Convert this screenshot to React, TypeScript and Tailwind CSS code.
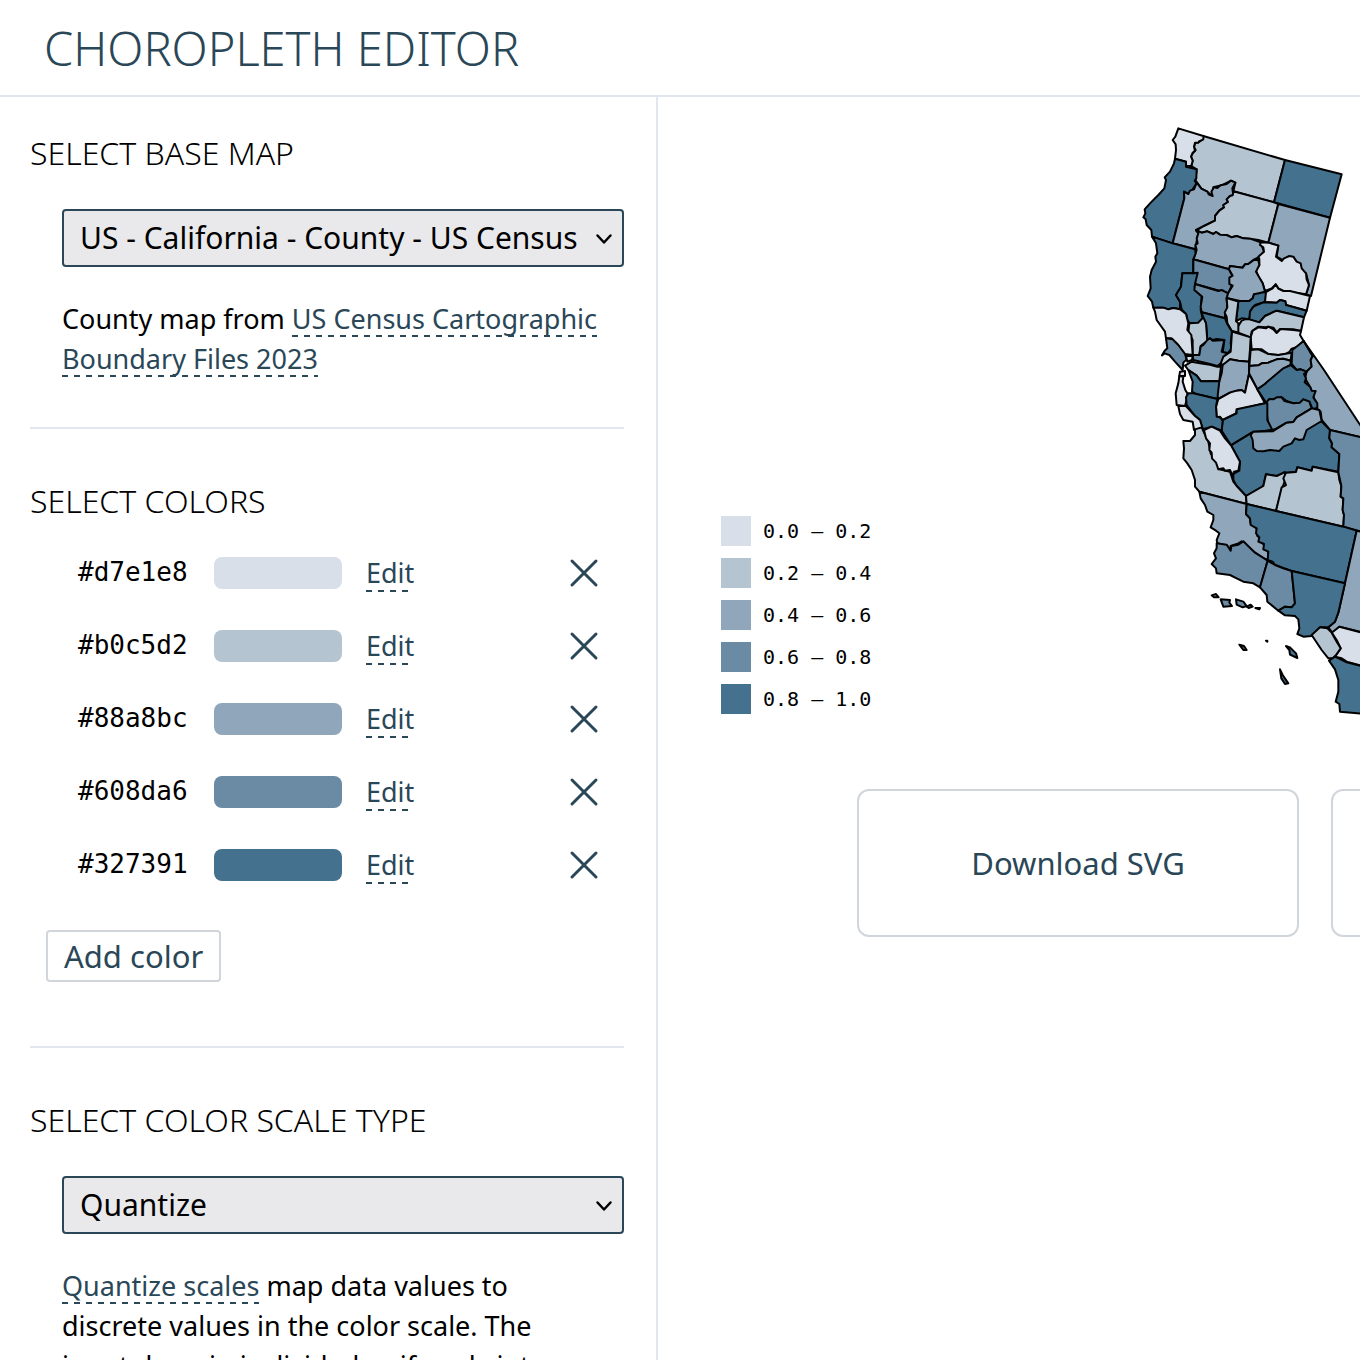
import { useState } from "react";

interface County {
  points: string;
  level: number;
}

const palette = [
  { hex: "#d7e1e8", swatch: "bg-[#d8dfe8]", fill: "fill-[#d8dfe8]" },
  { hex: "#b0c5d2", swatch: "bg-[#b4c4d1]", fill: "fill-[#b4c4d1]" },
  { hex: "#88a8bc", swatch: "bg-[#8fa6bb]", fill: "fill-[#8fa6bb]" },
  { hex: "#608da6", swatch: "bg-[#6b8aa4]", fill: "fill-[#6b8aa4]" },
  { hex: "#327391", swatch: "bg-[#44718e]", fill: "fill-[#44718e]" },
];

const legend = ["0.0 – 0.2", "0.2 – 0.4", "0.4 – 0.6", "0.6 – 0.8", "0.8 – 1.0"];

const counties: County[] = [
  // Siskiyou
  { level: 1, points: "220,78 465,150 432,277 310,244 316,218 303,212 278,225 250,232 246,258 232,245 214,236 203,220 196,210 200,178 184,168 188,152 183,140 188,130 197,120 192,112 195,98 205,97 218,88" },
  // Del Norte
  { level: 0, points: "145,55 220,78 220,88 207,94 205,98 195,98 192,110 195,122 188,128 183,140 188,152 184,168 168,167 168,155 135,146 138,120 137,103 128,90 136,80" },
  // Modoc
  { level: 4, points: "465,150 635,193 600,323 432,277" },
  // Humboldt
  { level: 4, points: "135,146 168,155 168,170 200,178 199,205 194,212 200,220 188,238 175,252 162,245 163,265 128,400 66,380 64,360 50,345 47,328 40,322 46,310 44,298 60,280 85,255 103,235 108,210 104,202 120,185 132,160" },
  // Trinity
  { level: 2, points: "162,245 175,252 180,242 192,238 200,218 214,236 232,245 236,253 248,258 244,245 252,232 262,234 272,226 290,222 303,212 316,218 307,235 310,256 300,258 290,268 294,276 280,285 282,292 268,302 255,318 255,332 222,348 198,360 205,370 195,418 128,400 163,265" },
  // Shasta
  { level: 1, points: "310,244 432,277 445,282 415,398 385,390 360,386 340,385 320,378 305,382 290,375 270,374 258,366 250,372 232,364 215,368 198,362 222,348 255,332 255,318 268,302 282,292 280,285 294,276 290,268 300,258 308,256" },
  // Lassen
  { level: 2, points: "445,282 600,323 543,558 528,553 537,525 528,490 440,440 445,407 415,398" },
  // Tehama
  { level: 2, points: "198,360 215,368 232,364 250,372 258,366 270,374 290,375 305,382 320,378 340,385 360,386 392,397 402,425 390,440 370,450 355,462 345,463 337,473 300,468 297,478 190,448 200,420 196,405 203,400 200,385 205,370" },
  // Plumas
  { level: 0, points: "415,398 445,407 438,440 455,453 462,445 478,438 490,440 500,455 512,460 515,475 528,490 530,508 537,525 528,553 460,543 445,535 437,523 425,535 405,543 398,520 385,500 378,482 388,465 388,447 385,440 402,425 400,412 390,405 392,397" },
  // Mendocino
  { level: 4, points: "66,380 128,400 195,418 197,430 190,448 190,490 157,490 153,530 138,555 150,575 150,598 130,594 115,598 100,593 70,593 66,575 53,558 62,535 60,500 65,480 78,455 76,440 82,430 78,400" },
  // Lake
  { level: 4, points: "157,490 190,490 205,488 200,510 194,530 200,545 215,558 212,600 218,625 205,638 180,640 172,630 168,612 155,598 150,575 138,555 153,530" },
  // Glenn
  { level: 3, points: "190,448 297,478 308,500 300,518 306,525 295,550 195,522 203,488 190,490" },
  // Colusa
  { level: 3, points: "195,522 265,543 275,540 295,550 290,566 292,595 285,608 285,625 215,607 212,590 217,560 193,540" },
  // Butte
  { level: 2, points: "297,478 300,468 338,473 345,463 355,462 372,450 385,450 388,465 378,485 398,520 405,545 385,552 372,553 368,565 358,573 330,573 290,564 295,548 308,527 298,522 298,503 308,497" },
  // Yuba
  { level: 4, points: "325,573 358,573 368,565 372,553 408,545 407,575 375,585 362,602 358,628 335,625 318,633" },
  // Sierra
  { level: 0, points: "408,546 428,535 437,523 445,536 460,543 480,543 540,558 530,602 468,585 466,574 450,570 440,578 405,576" },
  // Nevada
  { level: 4, points: "358,628 360,605 370,590 400,577 440,578 450,570 466,574 468,585 530,602 522,622 440,602 405,618 388,637" },
  // Placer
  { level: 1, points: "522,622 513,663 490,658 450,657 440,667 430,653 415,650 408,652 385,650 365,665 362,682 325,668 320,655 335,632 345,628 358,628 388,637 405,618 440,602" },
  // Sutter
  { level: 1, points: "290,564 325,575 318,633 325,640 325,668 305,662 292,640 290,620 284,608 292,592" },
  // El Dorado
  { level: 0, points: "362,682 368,662 385,652 408,655 415,650 430,658 440,669 452,657 490,660 513,663 510,675 521,693 500,712 485,716 478,726 465,733 445,735 415,732 395,718 365,718" },
  // Yolo
  { level: 4, points: "215,607 285,625 292,642 306,665 302,700 305,715 295,728 278,728 283,690 260,687 248,690 240,685 232,692 228,640 220,625" },
  // Napa
  { level: 1, points: "178,640 205,638 220,622 228,640 232,692 212,708 208,735 188,735 188,690 175,665" },
  // Sonoma
  { level: 0, points: "70,593 100,593 115,598 130,594 150,598 168,612 175,640 172,660 184,675 188,735 165,732 140,700 125,685 108,685 105,665 80,630 75,605" },
  // Marin
  { level: 3, points: "108,685 128,688 145,705 165,732 170,748 160,758 158,780 135,755 118,735 104,730 96,736 104,722 112,715" },
  // Solano
  { level: 3, points: "232,690 240,685 248,692 283,690 275,725 292,730 280,755 262,768 240,762 190,750 188,735 208,735 212,710 220,705" },
  // Sacramento
  { level: 1, points: "306,665 362,682 360,718 357,755 325,752 300,748 285,762 270,766 280,740 302,725" },
  // Contra Costa
  { level: 1, points: "165,767 185,755 210,760 240,764 262,770 273,768 268,813 213,814 200,797 175,780" },
  // Amador
  { level: 1, points: "362,720 385,718 400,725 415,732 445,735 485,728 482,752 460,746 440,748 415,758 395,760 385,766 358,768" },
  // Calaveras
  { level: 2, points: "358,768 385,766 395,760 415,758 440,748 460,746 482,752 482,765 462,775 405,822 382,838 357,790" },
  // Alpine
  { level: 3, points: "487,720 521,693 548,738 542,750 545,770 530,785 512,778 500,780 485,762" },
  // San Joaquin
  { level: 2, points: "300,748 325,752 357,755 357,792 345,848 335,840 320,842 300,848 265,867 258,850 275,790 278,765" },
  // Alameda
  { level: 4, points: "175,780 200,797 213,814 268,813 262,867 225,858 200,853 186,845 188,815" },
  // Stanislaus
  { level: 0, points: "357,792 382,838 405,880 320,900 318,910 278,930 270,920 260,922 258,890 265,867 300,848 320,842 335,840 345,848" },
  // Mono
  { level: 2, points: "521,693 582,780 730,1005 730,990 600,960 575,930 572,905 560,895 552,865 540,830 525,805 530,785 545,770 542,750 548,738" },
  // Tuolumne
  { level: 4, points: "482,765 500,780 512,778 530,785 522,792 528,805 524,817 540,830 545,842 557,843 550,862 562,880 562,893 548,898 538,875 520,868 510,878 490,880 470,873 455,862 430,868 408,878 382,838 405,822 412,815 460,775" },
  // Mariposa
  { level: 3, points: "408,878 418,867 430,868 440,862 455,862 463,873 490,880 510,878 520,868 538,875 545,895 500,922 490,936 470,938 428,962 416,950 410,910" },
  // Merced
  { level: 4, points: "278,930 320,910 320,898 405,880 412,880 412,930 428,962 370,965 303,1006 275,962" },
  // Fresno
  { level: 4, points: "303,1006 362,970 575,935 600,960 598,985 606,1000 605,1012 628,1032 625,1085 548,1070 545,1082 502,1072 498,1086 470,1088 440,1098 408,1093 400,1128 348,1158 320,1128 310,1110 310,1092 328,1082 330,1055" },
  // Madera
  { level: 2, points: "370,965 428,964 470,938 490,936 500,922 545,895 568,900 575,933 530,960 520,988 508,990 495,985 485,1000 460,1010 448,1023 420,1020 400,1024 380,1023 370,1015 368,990 362,975" },
  // San Mateo
  { level: 0, points: "148,798 160,800 158,815 166,840 172,850 172,862 165,888 140,885 137,850 145,820" },
  // Santa Clara
  { level: 4, points: "175,850 190,850 225,858 262,867 258,890 260,920 270,922 278,932 275,962 245,950 218,958 210,930 195,918 170,885 168,862" },
  // Santa Cruz
  { level: 0, points: "145,888 168,888 195,918 210,930 218,955 192,960 188,935 160,930 150,912" },
  // Monterey
  { level: 1, points: "195,958 215,952 222,968 235,995 242,1030 262,1060 268,1078 300,1085 310,1115 320,1128 348,1158 350,1182 208,1145 195,1130 195,1110 185,1080 172,1060 160,1045 162,1015 160,993 180,993 195,975" },
  // San Benito
  { level: 0, points: "222,960 245,950 270,962 285,985 303,1006 330,1055 325,1082 312,1085 308,1098 300,1080 285,1082 280,1075 265,1078 258,1058 246,1045 245,1028 238,1020 240,1000 228,985" },
  // Kings
  { level: 1, points: "408,1093 440,1098 465,1086 468,1105 458,1130 438,1203 350,1182 348,1158 400,1128" },
  // Tulare
  { level: 1, points: "468,1088 498,1086 502,1072 545,1082 548,1070 625,1087 628,1110 634,1128 632,1160 640,1165 638,1200 642,1215 640,1250 438,1203 455,1132 468,1125 460,1105" },
  // Inyo
  { level: 3, points: "600,960 730,990 730,1275 640,1250 642,1215 638,1200 640,1165 632,1160 634,1128 625,1087 628,1032 605,1012 606,1000 598,985" },
  // San Luis Obispo
  { level: 2, points: "208,1145 350,1182 348,1212 360,1225 362,1240 380,1255 382,1278 398,1290 400,1302 415,1310 415,1350 400,1345 375,1328 335,1294 325,1300 302,1308 302,1320 290,1308 262,1300 260,1290 268,1270 258,1262 242,1252 250,1230 250,1215 232,1205 225,1185 212,1165" },
  // Kern
  { level: 4, points: "350,1182 438,1203 640,1250 680,1262 645,1420 485,1383 435,1365 428,1355 413,1350 415,1325 400,1318 402,1302 385,1295 388,1282 378,1270 380,1255 362,1245 360,1225 348,1212" },
  // Santa Barbara
  { level: 3, points: "260,1300 290,1304 302,1322 304,1308 325,1304 340,1294 375,1328 413,1352 390,1432 370,1420 340,1415 320,1405 300,1395 260,1390 258,1375 245,1362 258,1345 252,1330 260,1315" },
  // Ventura
  { level: 3, points: "413,1352 435,1365 460,1375 485,1383 495,1480 485,1492 465,1490 445,1502 412,1475 410,1455 390,1432" },
  // San Bernardino
  { level: 2, points: "680,1262 730,1275 730,1575 628,1550 608,1570 595,1552 615,1535 625,1508 645,1420" },
  // Los Angeles
  { level: 4, points: "485,1383 645,1420 625,1508 615,1535 595,1552 570,1552 545,1578 520,1580 502,1572 508,1555 505,1528 495,1518 465,1516 445,1502 465,1490 485,1492 495,1480" },
  // Riverside
  { level: 0, points: "628,1550 730,1577 730,1677 650,1655 635,1645 615,1640 632,1615 620,1590 605,1568" },
  // Orange
  { level: 1, points: "545,1575 570,1552 592,1555 605,1568 620,1595 632,1615 618,1635 608,1645 595,1645 575,1620" },
  // San Diego
  { level: 4, points: "597,1652 615,1640 650,1657 730,1677 730,1814 630,1805 628,1782 617,1775 625,1745 625,1710 615,1678" },
];

// Channel Islands, San Francisco and the north bay shore
const islands: County[] = [
  { level: 3, points: "245,1456 258,1452 266,1462 252,1462" },
  { level: 3, points: "272,1468 300,1470 298,1478 306,1488 280,1490" },
  { level: 3, points: "318,1468 340,1475 350,1488 338,1492 320,1484" },
  { level: 3, points: "350,1490 362,1484 368,1490 356,1494" },
  { level: 3, points: "376,1494 390,1494 388,1498" },
  { level: 4, points: "328,1604 342,1608 350,1620 340,1620" },
  { level: 4, points: "408,1592 412,1592 412,1595" },
  { level: 4, points: "468,1608 480,1612 498,1630 502,1644 480,1634 478,1620" },
  { level: 4, points: "450,1678 458,1695 475,1720 465,1722 454,1705" },
  { level: 0, points: "150,785 165,783 165,798 148,798" },
  { level: 0, points: "168,738 188,738 186,750 172,755" },
];

const CaliforniaMap = () => (
  <svg viewBox="0 0 720 1920" className="w-60 h-[640px] shrink-0" role="img">
    <g className="stroke-black stroke-[6px]" strokeLinejoin="round">
      {[...counties, ...islands].map(({ points, level }) => (
        <polygon key={points} points={points} className={palette[level].fill} />
      ))}
    </g>
  </svg>
);

interface SelectFieldProps {
  id: string;
  options: string[];
}

const SelectField = ({ id, options }: SelectFieldProps) => (
  <div className="relative">
    <select
      id={id}
      className="block w-full h-[58px] pl-4 pr-9 text-[30px] leading-[40px] text-black bg-[#e9e9eb] border-2 border-[#2a4758] rounded appearance-none"
    >
      {options.map((option) => (
        <option key={option}>{option}</option>
      ))}
    </select>
    <svg
      viewBox="0 0 18 12"
      className="absolute right-[11px] top-6 w-[18px] h-3 pointer-events-none"
      fill="none"
      stroke="black"
      strokeWidth="2.5"
      strokeLinecap="round"
      strokeLinejoin="round"
    >
      <path d="M2.500 2.500l6.500 7 6.500-7" />
    </svg>
  </div>
);

// dashed underline drawn as a background, six pixels on and six off
const linkStyle =
  "text-[#2a4758] bg-[repeating-linear-gradient(90deg,#2a4758_0_6px,transparent_6px_12px)] bg-[length:100%_2px] bg-bottom bg-no-repeat box-decoration-clone";
const headingStyle = "text-[32px] leading-10 font-light uppercase";

const App = () => {
  const [colors, setColors] = useState(palette);

  return (
    <div className="flex flex-col h-screen overflow-hidden bg-white text-black font-['Noto_Sans',sans-serif]">
      <header className="shrink-0 px-11 pt-4 pb-[15px] border-b-2 border-[#e2e6f0]">
        <h1 className="text-[47px] leading-[64px] font-light uppercase text-[#2a4758]">
          Choropleth Editor
        </h1>
      </header>

      <div className="flex flex-1 min-h-0">
        <aside className="w-[658px] shrink-0 overflow-hidden pl-[30px] pr-8 border-r-2 border-[#e2e6f0]">
          <section className="pt-9 pb-12 border-b-2 border-[#e2e6f0]">
            <h2 className={headingStyle}>
              <label htmlFor="base-map">Select base map</label>
            </h2>
            <div className="pl-8 pt-9">
              <SelectField id="base-map" options={["US - California - County - US Census"]} />
              <p className="pt-8 pr-5 text-[27px] leading-10">
                County map from{" "}
                <a href="#census" className={linkStyle}>
                  US Census Cartographic Boundary Files 2023
                </a>
              </p>
            </div>
          </section>

          <section className="pt-[52px] pb-16 border-b-2 border-[#e2e6f0]">
            <h2 className={headingStyle}>Select colors</h2>
            <ul className="pt-[15px] pl-12">
              {colors.map(({ hex, swatch }) => (
                <li key={hex} className="flex items-center h-[73px] pr-6">
                  <span className="w-28 text-[26px] font-['DejaVu_Sans_Mono',monospace]">
                    {hex}
                  </span>
                  <span className={`w-32 h-8 ml-6 rounded-lg ${swatch}`}></span>
                  <button type="button" className={`ml-6 text-[27px] leading-[38px] ${linkStyle}`}>
                    Edit
                  </button>
                  <button
                    type="button"
                    aria-label="Remove"
                    className="ml-auto"
                    onClick={() => setColors(colors.filter((color) => color.hex !== hex))}
                  >
                    <svg
                      viewBox="0 0 32 32"
                      className="w-8 h-8"
                      fill="none"
                      stroke="#2a4758"
                      strokeWidth="3"
                      strokeLinecap="round"
                    >
                      <path d="M4 4l24 24M28 4L4 28" />
                    </svg>
                  </button>
                </li>
              ))}
            </ul>
            <button
              type="button"
              className="mt-[29px] ml-4 px-4 h-[52px] text-[31px] leading-10 text-[#2a4758] border-2 border-[#d1d5dc] rounded"
            >
              Add color
            </button>
          </section>

          <section className="pt-[52px]">
            <h2 className={headingStyle}>
              <label htmlFor="scale-type">Select color scale type</label>
            </h2>
            <div className="pl-8 pt-9">
              <SelectField id="scale-type" options={["Quantize"]} />
              <p className="pt-8 pr-5 text-[27px] leading-10">
                <a href="#quantize" className={linkStyle}>
                  Quantize scales
                </a>{" "}
                map data values to discrete values in the color scale. The input domain is
                divided uniformly into
              </p>
            </div>
          </section>
        </aside>

        <main className="flex-1 min-w-0 overflow-hidden pt-[13px]">
          <div className="flex items-end pl-[63px]">
            <ul className="flex flex-col gap-3 w-[409px] pb-9 shrink-0">
              {legend.map((range, i) => (
                <li key={range} className="flex items-center gap-3">
                  <span className={`size-[30px] ${palette[i].swatch}`}></span>
                  <span className="text-[20px] leading-[30px] font-['DejaVu_Sans_Mono',monospace]">
                    {range}
                  </span>
                </li>
              ))}
            </ul>
            <CaliforniaMap />
          </div>

          <div className="flex gap-8 pl-[199px] pt-[39px]">
            <button
              type="button"
              className="w-[442px] h-[148px] shrink-0 text-[31px] text-[#2a4758] border-2 border-[#d1d5dc] rounded-xl"
            >
              Download SVG
            </button>
            <button
              type="button"
              aria-label="Download"
              className="w-[442px] h-[148px] shrink-0 border-2 border-[#d1d5dc] rounded-xl"
            ></button>
          </div>
        </main>
      </div>
    </div>
  );
};

export default App;
